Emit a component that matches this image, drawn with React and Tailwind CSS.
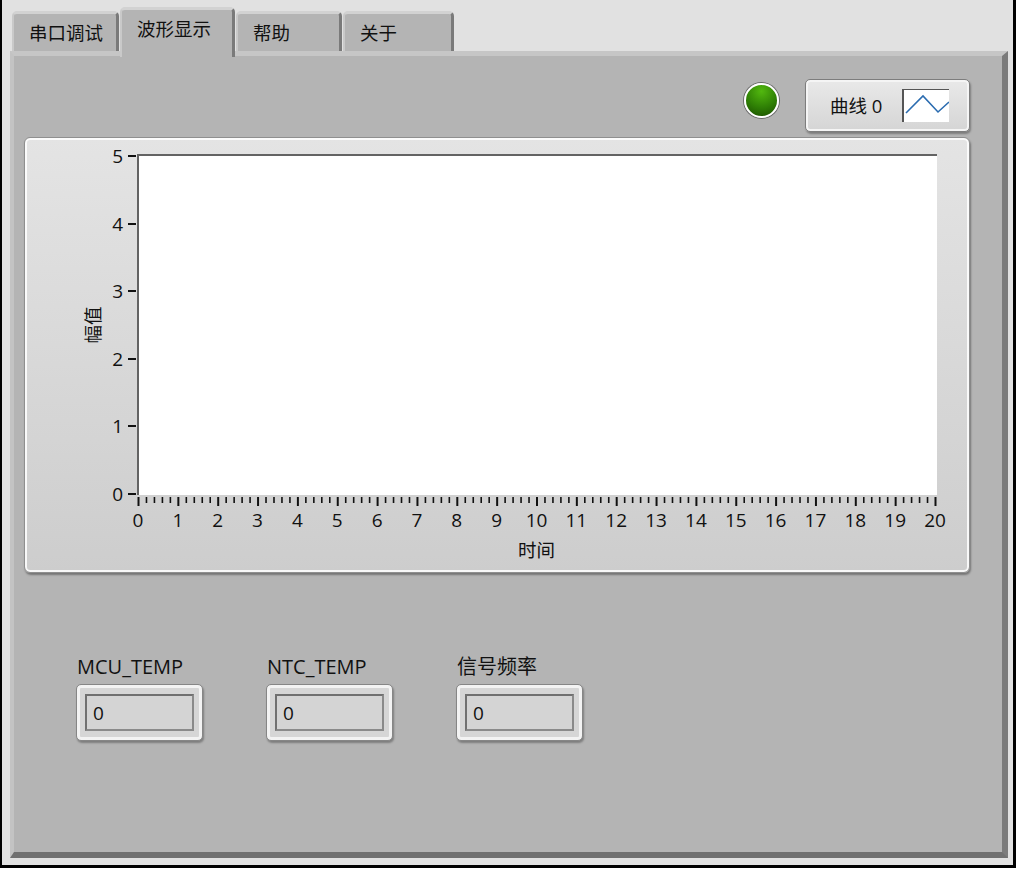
import React from "react";

const XS = Array.from({ length: 21 }, (_, i) => i);
const YS = [5, 4, 3, 2, 1, 0];
const STEP_X = 39.85;
const STEP_Y = 67.6;

function Tab({ label, className }) {
  return (
    <div
      className={
        "rounded-t-[5px] bg-[#b4b4b4] border-t-[3px] border-t-[#d2d2d2] border-l-2 border-l-[#c9c9c9] border-r-[3px] border-r-[#7a7a7a] pl-[15px] pt-[7px] text-[18.5px] " +
        className
      }
    >
      {label}
    </div>
  );
}

function Indicator({ label, value }) {
  return (
    <div className="flex flex-col w-[127px]">
      <span className="pl-[1px] mb-[5px] text-[20px]">{label}</span>
      <div className="h-[57px] rounded-[5px] border border-[#868686] bg-[#d6d6d6] shadow-[inset_0_0_0_3px_#f3f3f3,1px_2px_2px_rgba(0,0,0,0.3)] pt-[9px] pl-[8px]">
        <div className="w-[109px] h-[37px] border-2 border-t-[#707070] border-l-[#707070] border-r-[#8a8a8a] border-b-[#8a8a8a] bg-[#d4d4d4] pl-[6px] flex items-center text-[19px]">
          {value}
        </div>
      </div>
    </div>
  );
}

export default function App() {
  return (
    <div className="w-[1025px] h-[869px] bg-white font-['Open_Sans','Noto_Sans_CJK_SC',sans-serif] text-[18px] leading-[24px] text-[#111]">
      <div className="w-[1016px] h-[868px] bg-[#e1e1e1] border-l-2 border-r-[3px] border-b-[3px] border-black flex flex-col">
        {/* tabs */}
        <div className="flex items-end h-[51px] pl-[10px] shrink-0">
          <Tab label="串口调试" className="w-[107px] h-[40px]" />
          <Tab label="波形显示" className="relative z-10 w-[115px] h-[50px] -mb-[6px] ml-[1px]" />
          <Tab label="帮助" className="w-[106px] h-[40px] ml-[1px]" />
          <Tab label="关于" className="w-[111px] h-[40px] ml-[1px]" />
        </div>

        {/* panel */}
        <div className="ml-[8px] w-[998px] h-[807px] shrink-0 bg-[#b4b4b4] border-t-[5px] border-t-[#c6c6c6] border-l-[4px] border-l-[#c3c3c3] border-r-[6px] border-r-[#7b7b7b] border-b-[6px] border-b-[#707070] pl-[10px] pr-[32px] pt-[23px] flex flex-col">
          {/* top row */}
          <div className="flex justify-end items-start">
            <div className="mt-[4px] mr-[26px] w-[35px] h-[35px] rounded-full border-2 border-white shadow-[0_0_0_1px_#6b6b6b] bg-[radial-gradient(circle_at_50%_20%,#52b80f_0%,#2f8005_55%,#1a4c00_100%)]" />
            <div className="w-[165px] h-[53px] rounded-[5px] border border-[#7d7d7d] bg-gradient-to-b from-[#e9e9e9] to-[#d5d5d5] shadow-[inset_0_0_0_2px_#f5f5f5,1px_2px_2px_rgba(0,0,0,0.3)] flex items-center justify-between pl-[24px] pr-[20px]">
              <span className="text-[18.5px]">曲线 0</span>
              <div className="w-[47px] h-[33px] bg-white border-l-2 border-t border-[#555]">
                <svg width="45" height="32" viewBox="0 0 45 32">
                  <polyline
                    points="2,23 19,6 34,22 45,12"
                    fill="none"
                    stroke="#2b6cb0"
                    strokeWidth="1.6"
                  />
                </svg>
              </div>
            </div>
          </div>

          {/* graph frame */}
          <div className="mt-[5px] h-[436px] shrink-0 rounded-[6px] border border-[#8f8f8f] bg-gradient-to-b from-[#e4e4e4] to-[#cdcdcd] shadow-[inset_0_0_0_2px_rgba(255,255,255,0.85),1px_2px_2px_rgba(0,0,0,0.35)] pl-[112px] pt-[16px]">
            <div className="relative w-[800px] h-[341px] bg-white border-l-2 border-t-2 border-[#636363]">
              {YS.map((v) => {
                const y = 337 - v * STEP_Y;
                return (
                  <React.Fragment key={v}>
                    <div
                      className="absolute -left-[11px] w-[8px] h-[2px] bg-[#111]"
                      style={{ top: y }}
                    />
                    <div
                      className="absolute -left-[42px] w-[26px] text-right text-[19px]"
                      style={{ top: y - 11 }}
                    >
                      {v}
                    </div>
                  </React.Fragment>
                );
              })}

              <svg
                className="absolute top-full -left-[2px] mt-[2px]"
                width="802"
                height="12"
                viewBox="0 0 802 12"
              >
                {Array.from({ length: 101 }, (_, k) => {
                  const x = 1.5 + (k * STEP_X) / 5;
                  const major = k % 5 === 0;
                  return (
                    <line
                      key={k}
                      x1={x}
                      x2={x}
                      y1={0}
                      y2={major ? 9 : 6}
                      stroke="#111"
                      strokeWidth={major ? 2 : 1.6}
                    />
                  );
                })}
              </svg>

              {XS.map((i) => (
                <div
                  key={i}
                  className="absolute top-[352px] -translate-x-1/2 text-[19px]"
                  style={{ left: -1 + i * STEP_X }}
                >
                  {i}
                </div>
              ))}

              <div className="absolute top-[382px] left-0 right-0 text-center -ml-[3px] text-[18.5px]">时间</div>

              <div className="absolute -left-[70px] top-[157px] w-[48px] h-[24px] -rotate-90 text-center text-[18.5px]">
                幅值
              </div>
            </div>
          </div>

          {/* indicators */}
          <div className="mt-[82px] flex pl-[52px] gap-[63px]">
            <Indicator label="MCU_TEMP" value="0" />
            <Indicator label="NTC_TEMP" value="0" />
            <Indicator label="信号频率" value="0" />
          </div>
        </div>
      </div>
    </div>
  );
}
